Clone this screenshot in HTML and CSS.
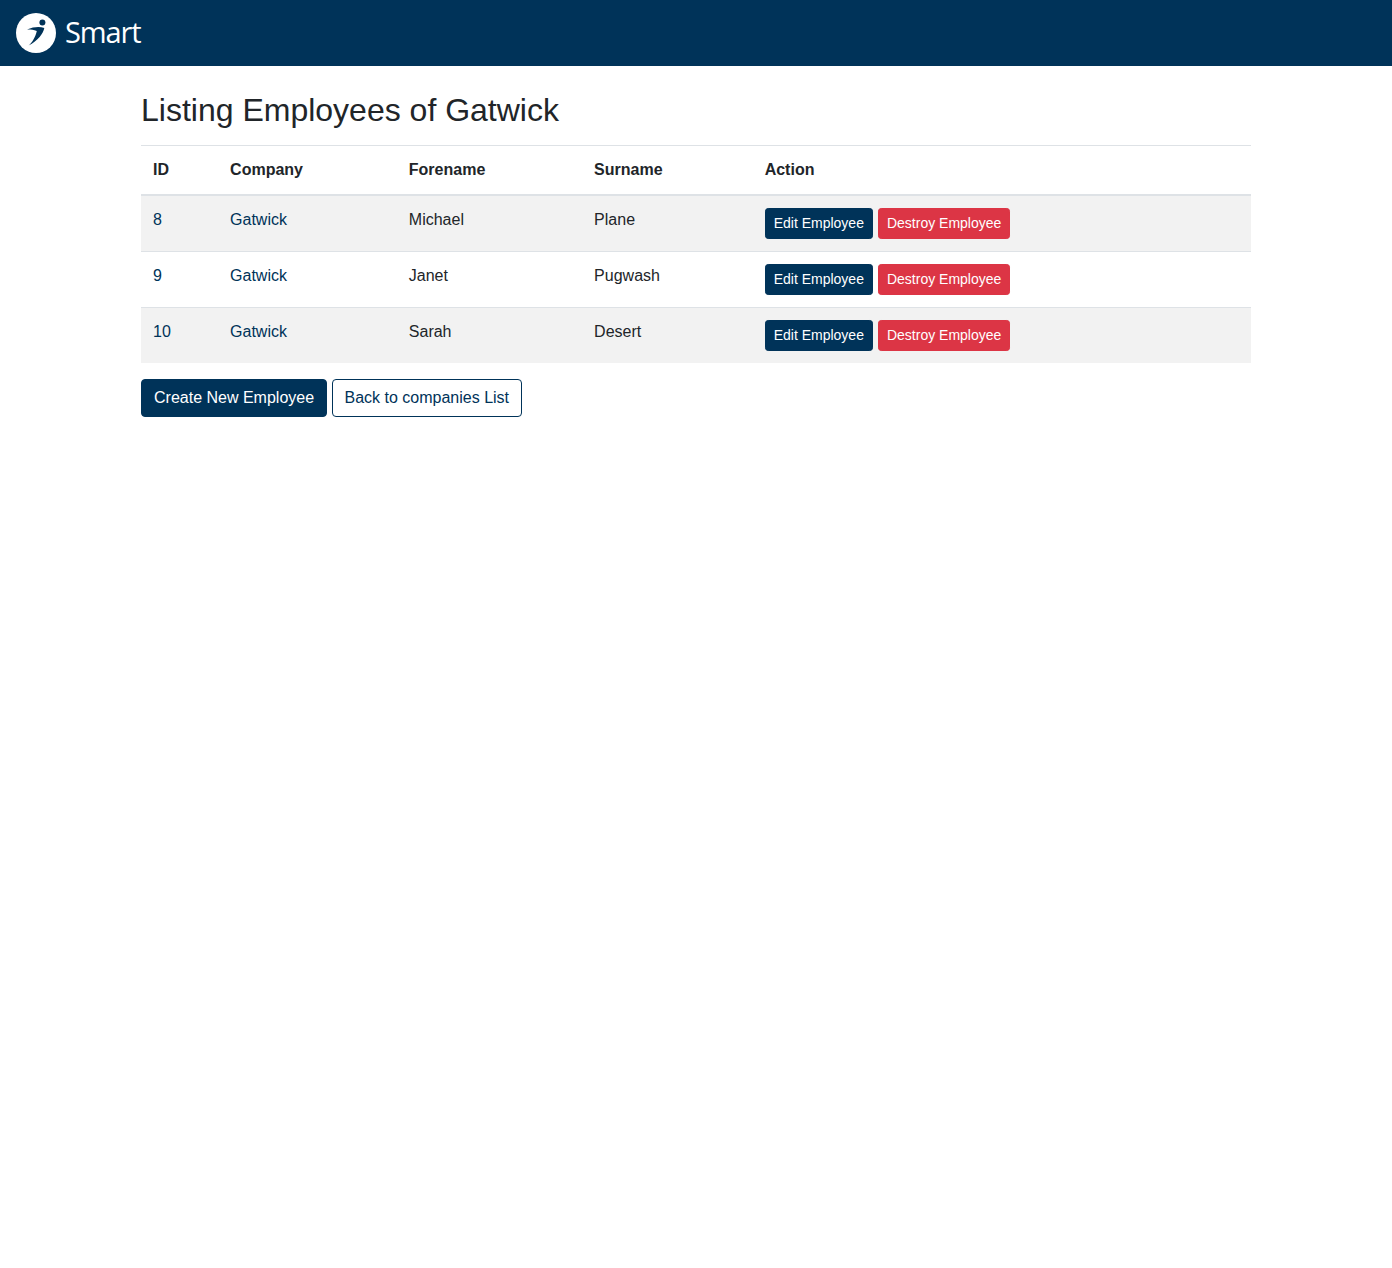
FILE: index.html
```html
<!DOCTYPE html>
<html lang="en">
<head>
  <meta charset="UTF-8">
  <meta name="viewport" content="width=device-width, initial-scale=1.0">
  <title>Listing Employees</title>
  <link rel="stylesheet" href="styles.css">
</head>
<body>

  <header class="navbar">
    <a class="brand" href="#">
      <svg class="brand-logo" width="40" height="40" viewBox="16 13 40 40">
        <circle cx="36" cy="33" r="20" fill="#fff"/>
        <circle cx="42.4" cy="22.4" r="3" fill="#003359"/>
        <path fill="#003359" d="M27 29.6C31 27.8 35 27 38.3 27C40.5 27 42.5 27.3 44.3 28C43.5 33 38 41 28.5 45.6C32 43 35.5 37 36.8 31C33.5 30 30.5 29.5 27 29.6Z"/>
      </svg>
      <span class="brand-name">Smart</span>
    </a>
  </header>

  <main class="container">
    <h1>Listing Employees of Gatwick</h1>

    <table class="table">
      <thead>
        <tr>
          <th>ID</th>
          <th>Company</th>
          <th>Forename</th>
          <th>Surname</th>
          <th>Action</th>
        </tr>
      </thead>
      <tbody>
        <tr>
          <td class="cell-link">8</td>
          <td class="cell-link">Gatwick</td>
          <td>Michael</td>
          <td>Plane</td>
          <td>
            <div class="actions">
              <a class="btn btn-sm btn-primary" href="#">Edit Employee</a>
              <a class="btn btn-sm btn-danger" href="#">Destroy Employee</a>
            </div>
          </td>
        </tr>
        <tr>
          <td class="cell-link">9</td>
          <td class="cell-link">Gatwick</td>
          <td>Janet</td>
          <td>Pugwash</td>
          <td>
            <div class="actions">
              <a class="btn btn-sm btn-primary" href="#">Edit Employee</a>
              <a class="btn btn-sm btn-danger" href="#">Destroy Employee</a>
            </div>
          </td>
        </tr>
        <tr>
          <td class="cell-link">10</td>
          <td class="cell-link">Gatwick</td>
          <td>Sarah</td>
          <td>Desert</td>
          <td>
            <div class="actions">
              <a class="btn btn-sm btn-primary" href="#">Edit Employee</a>
              <a class="btn btn-sm btn-danger" href="#">Destroy Employee</a>
            </div>
          </td>
        </tr>
      </tbody>
    </table>

    <a class="btn btn-primary" href="#">Create New Employee</a>
    <a class="btn btn-outline" href="#">Back to companies List</a>
  </main>

</body>
</html>
```

FILE: styles.css
```css
* {
  box-sizing: border-box;
}
body {
  margin: 0;
  font-family: "Liberation Sans", Arial, sans-serif;
  font-size: 16px;
  line-height: 1.5;
  color: #212529;
  background-color: #fff;
}
.navbar {
  height: 66px;
  background-color: #003359;
  padding: 13px 16px;
}
.brand {
  display: flex;
  align-items: center;
  height: 40px;
  color: #fff;
  text-decoration: none;
}
.brand-logo {
  display: block;
}
.brand-name {
  margin-left: 9px;
  margin-top: -2px;
  font-family: "Open Sans", sans-serif;
  font-size: 29px;
  letter-spacing: -1.1px;
  line-height: 40px;
}
.container {
  max-width: 1140px;
  margin: 0 auto;
  padding: 25px 15px 0;
}
h1 {
  margin: 0 0 16px;
  font-size: 32px;
  font-weight: 500;
  line-height: 1.2;
}
.table {
  width: 100%;
  margin-bottom: 16px;
  border-collapse: collapse;
  color: #212529;
}
.table th,
.table td {
  padding: 12px;
  text-align: left;
  vertical-align: top;
  border-top: 1px solid #dee2e6;
}
.table thead th {
  border-bottom: 2px solid #dee2e6;
}
.table tbody tr:nth-of-type(odd) {
  background-color: #f2f2f2;
}
.table .cell-link {
  color: #003359;
}
.actions {
  display: flex;
  gap: 5px;
  padding-right: 0.5px;
}
.btn {
  display: inline-block;
  padding: 6px 12px;
  font-size: 16px;
  line-height: 1.5;
  text-align: center;
  text-decoration: none;
  vertical-align: middle;
  border: 1px solid transparent;
  border-radius: 4px;
}
.btn-sm {
  padding: 4px 8px;
  font-size: 14px;
  border-radius: 3.2px;
}
.btn-primary {
  color: #fff;
  background-color: #003359;
  border-color: #003359;
}
.btn-danger {
  color: #fff;
  background-color: #dc3545;
  border-color: #dc3545;
}
.btn-outline {
  color: #003359;
  background-color: #fff;
  border-color: #003359;
}
```
